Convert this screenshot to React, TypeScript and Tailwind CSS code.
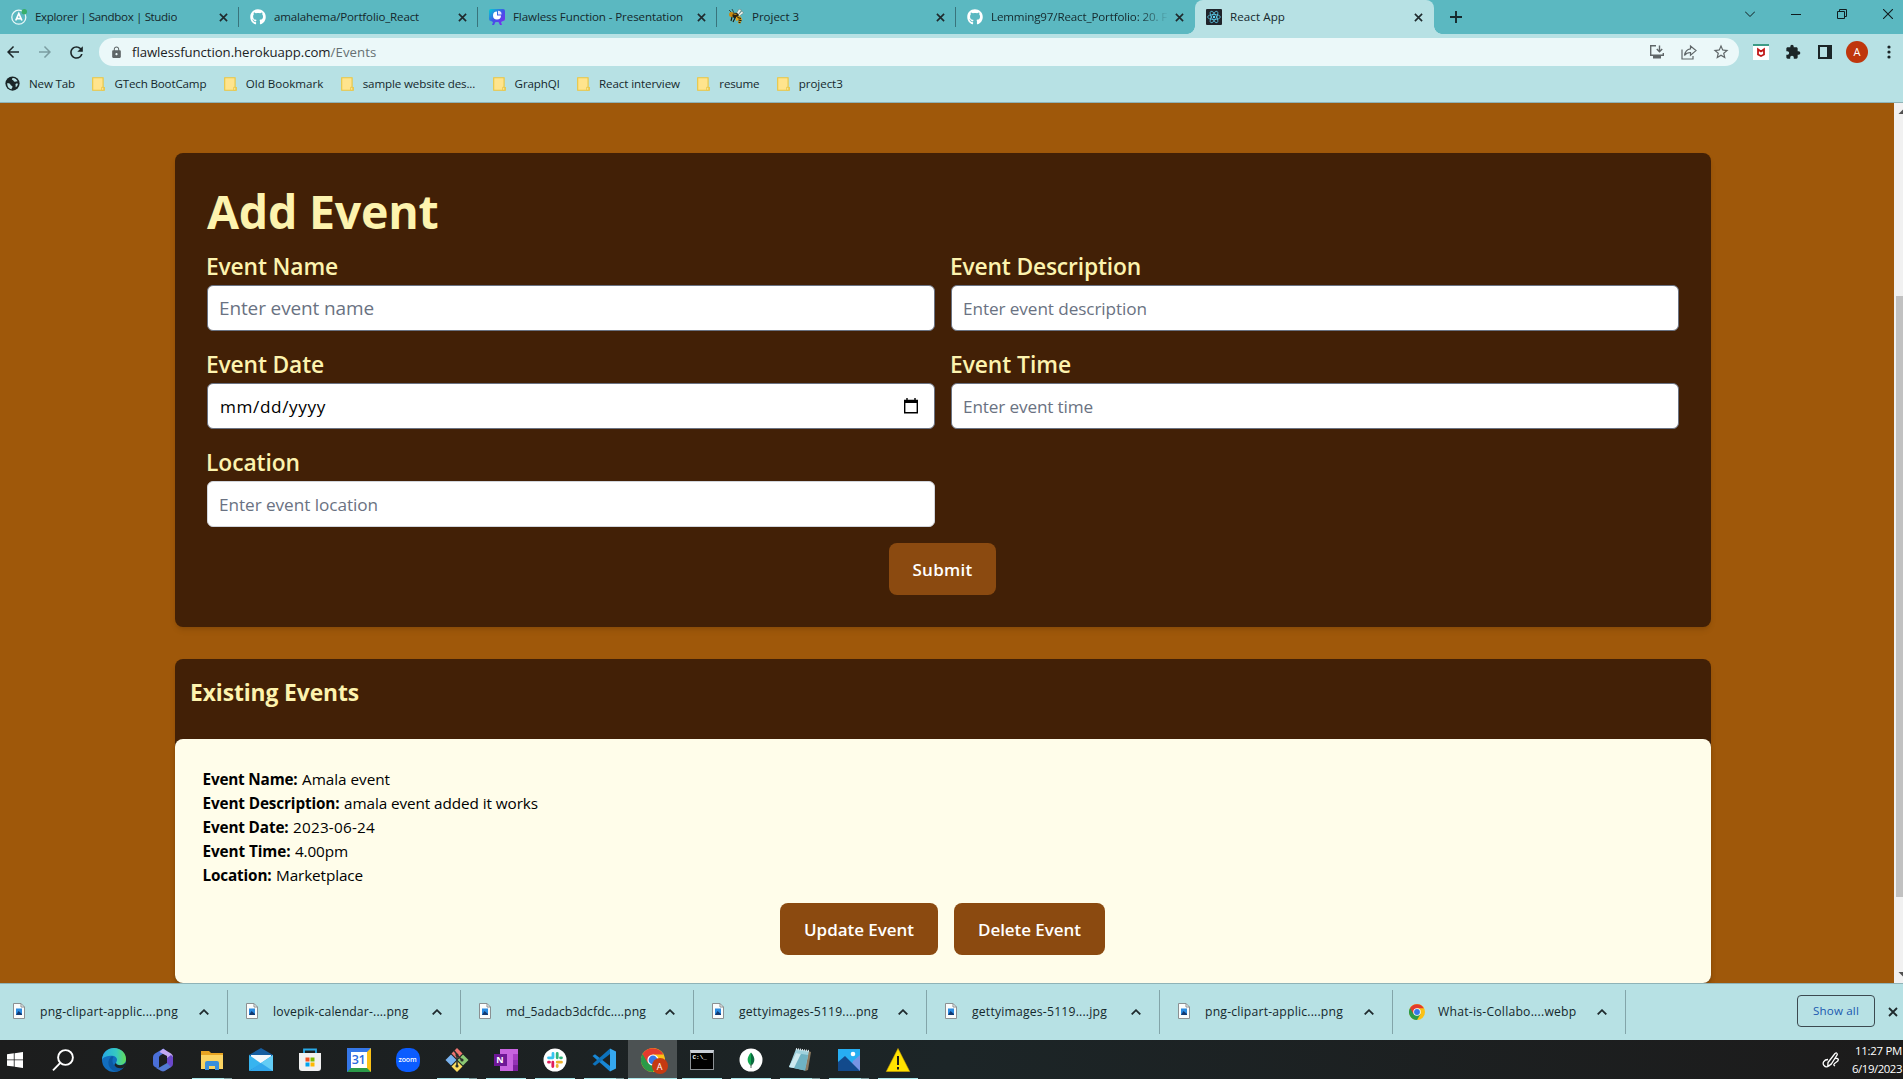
import { useLayoutEffect, useRef, type ReactNode } from "react";
import { FaGithub } from "react-icons/fa";
import { MdExtension, MdLock, MdStarBorder, MdRefresh, MdArrowBack, MdArrowForward } from "react-icons/md";

/* Text set to a given line width by adjusting its letter spacing. */
function Fit({ w, className = "", children }: { w: number; className?: string; children: string }) {
  const ref = useRef<HTMLSpanElement>(null);
  useLayoutEffect(() => {
    const el = ref.current;
    if (!el) return;
    el.style.letterSpacing = "0px";
    const natural = el.getBoundingClientRect().width;
    el.style.letterSpacing = `${(w - natural) / children.length}px`;
  }, [w, children]);
  return (
    <span ref={ref} className={`inline-block shrink-0 whitespace-pre ${className}`}>
      {children}
    </span>
  );
}

function Close({ className = "" }: { className?: string }) {
  return (
    <svg viewBox="0 0 10 10" className={`h-[9px] w-[9px] shrink-0 ${className}`} fill="none" stroke="#1f2a2d" strokeWidth="1.8">
      <path d="M1 1l8 8M9 1l-8 8" />
    </svg>
  );
}

function ChromeLogo({ className = "" }: { className?: string }) {
  return (
    <svg viewBox="0 0 24 24" className={`shrink-0 ${className}`}>
      <circle cx="12" cy="12" r="12" fill="#fbc116" />
      <path d="M12 12L1.6 6A12 12 0 0 0 12 24l5.2-9z" fill="#2a9a48" />
      <path d="M1.6 6A12 12 0 0 1 22.4 6.5H12L6.8 15z" fill="#e33b2e" />
      <circle cx="12" cy="12" r="5.6" fill="#fff" />
      <circle cx="12" cy="12" r="4.4" fill="#3577e8" />
    </svg>
  );
}

const ApolloIcon = () => (
  <svg viewBox="0 0 16 16" className="h-4 w-4 overflow-visible">
    <circle cx="7.8" cy="8.2" r="7" fill="none" stroke="#e9f8f9" strokeWidth="1.3" />
    <path d="M4.7 11.5L7.8 4.5l3.1 7M6 9.7h3.7" fill="none" stroke="#fff" strokeWidth="1.7" />
    <circle cx="13.3" cy="2.8" r="2.7" fill="#38ae6b" />
  </svg>
);
const PitchIcon = () => (
  <svg viewBox="0 0 16 16" className="h-4 w-4">
    <defs>
      <linearGradient id="pitch" x1="0" y1="0" x2="1" y2="1">
        <stop offset="0" stopColor="#00d0d4" />
        <stop offset=".5" stopColor="#3f55e8" />
        <stop offset="1" stopColor="#8b22f0" />
      </linearGradient>
    </defs>
    <path d="M2 0h12a2 2 0 0 1 2 2v8a2 2 0 0 1-2 2l-2 1 1 3h-2l-1.5-3H6.500L5 16H3l1-3-2-1a2 2 0 0 1-2-2V2a2 2 0 0 1 2-2z" fill="url(#pitch)" />
    <path d="M8 2.500a4 4 0 1 0 4 4H8z" fill="#fff" />
    <path d="M9 1.800v3.700h3.600A3.700 3.700 0 0 0 9 1.800z" fill="#e3e6ff" />
  </svg>
);
const BeeIcon = () => (
  <svg viewBox="0 0 16 16" className="h-4 w-4">
    <path d="M5 5L1 1M6 4L4 0" stroke="#27322f" strokeWidth=".8" />
    <path d="M8 5l3-5 2.500 1-3.500 5zM10 6l4-4 1.500 2-4 3z" fill="#e6f0ea" stroke="#56605a" strokeWidth=".4" />
    <circle cx="3.500" cy="5.500" r="2.500" fill="#c98a12" />
    <ellipse cx="7.500" cy="6.500" rx="3" ry="2.700" fill="#2b2110" />
    <path d="M8 8l4-1 2 3-2 5-2-1 1-3-3 1z" fill="#e2a31a" />
    <path d="M9.500 8.500l3.500 1M10.500 11l3 .6M10.500 13l2 .8M4 8l-1 4M7 9l-2 4" stroke="#1f1808" strokeWidth="1.100" />
    <path d="M5.500 5l3 .4" stroke="#e2a31a" strokeWidth="1" />
  </svg>
);
const ReactIcon = () => (
  <svg viewBox="0 0 16 16" className="h-4 w-4">
    <rect width="16" height="16" rx="1" fill="#20232a" />
    <g fill="none" stroke="#61dafb" strokeWidth=".7">
      <ellipse cx="8" cy="8" rx="6.400" ry="2.500" />
      <ellipse cx="8" cy="8" rx="6.400" ry="2.500" transform="rotate(60 8 8)" />
      <ellipse cx="8" cy="8" rx="6.400" ry="2.500" transform="rotate(120 8 8)" />
    </g>
    <circle cx="8" cy="8" r="1.200" fill="#61dafb" />
  </svg>
);

const tabs: { title: string; w: number; icon: ReactNode; fade?: boolean; active?: boolean; divider?: boolean }[] = [
  { title: "Explorer | Sandbox | Studio", w: 142, icon: <ApolloIcon />, divider: true },
  { title: "amalahema/Portfolio_React", w: 145, icon: <FaGithub className="h-4 w-4 text-white" />, divider: true },
  { title: "Flawless Function - Presentation", w: 170, icon: <PitchIcon />, divider: true },
  { title: "Project 3", w: 47, icon: <BeeIcon />, divider: true },
  { title: "Lemming97/React_Portfolio: 20. F", w: 176, icon: <FaGithub className="h-4 w-4 text-white" />, fade: true },
  { title: "React App", w: 55, icon: <ReactIcon />, active: true },
];

function TabStrip() {
  return (
    <div className="flex h-[34px] bg-[#5bb8c1]">
      {tabs.map((t) => (
        <div
          key={t.title}
          className={`relative flex h-[34px] w-[239px] shrink-0 items-center pr-[11px] pl-[11px] ${t.active ? "rounded-t-lg bg-[#b7e1e4]" : ""}`}
        >
          <span className="mr-2 shrink-0">{t.icon}</span>
          <span className={`flex overflow-hidden pb-px ${t.fade ? "[mask-image:linear-gradient(to_right,#000_84%,transparent_101%)]" : ""}`}>
            <Fit w={t.w} className="text-[11.6px] leading-4 text-[#15282c]">{t.title}</Fit>
          </span>
          <Close className="ml-auto" />
          {t.divider && <span className="absolute top-[7px] right-0 h-5 w-px bg-[#39747c]" />}
          {t.active && (
            <>
              <span className="absolute bottom-0 -left-2 h-2 w-2 bg-[radial-gradient(circle_at_0_0,#5bb8c1_7.500px,#b7e1e4_8px)]" />
              <span className="absolute -right-2 bottom-0 h-2 w-2 bg-[radial-gradient(circle_at_100%_0,#5bb8c1_7.500px,#b7e1e4_8px)]" />
            </>
          )}
        </div>
      ))}
      <svg viewBox="0 0 12 12" className="mt-[11px] ml-4 h-3 w-3" stroke="#15282c" strokeWidth="1.900">
        <path d="M6 0v12M0 6h12" />
      </svg>
      <div className="mt-[9px] mr-[10px] ml-auto flex h-[10px] items-center gap-9">
        <svg viewBox="0 0 10 10" className="h-[10px] w-[10px]" fill="none" stroke="#101c1f">
          <path d="M0 2.500l5 5 5-5" />
        </svg>
        <svg viewBox="0 0 10 10" className="h-[10px] w-[10px]" stroke="#101c1f">
          <path d="M0 5.500h10" />
        </svg>
        <svg viewBox="0 0 10 10" className="h-[10px] w-[10px]" fill="none" stroke="#101c1f">
          <path d="M.5 2.500h7v7h-7zM2.500 2.500v-2h7v7h-2" />
        </svg>
        <svg viewBox="0 0 10 10" className="h-[10px] w-[10px]" stroke="#101c1f" strokeWidth="1.100">
          <path d="M0 0l10 10M10 0L0 10" />
        </svg>
      </div>
    </div>
  );
}

function Toolbar() {
  return (
    <div className="flex h-8 items-center pt-1">
      <div className="flex w-[99px] items-center gap-[14px] pl-1 text-[18px] text-[#1b2527]">
        <MdArrowBack />
        <MdArrowForward className="text-[#7b9da1]" />
        <MdRefresh className="-ml-px text-[19px]" />
      </div>
      <div className="flex h-7 w-[1640px] items-center rounded-full bg-[#ebf8f9] pr-[9px] pl-[11px] text-[#5f6668]">
        <MdLock className="mr-[9px] h-[13px] w-[13px]" />
        <span className="flex pt-px text-[13.200px]">
          <Fit w={198.500} className="text-[#1b2224]">flawlessfunction.herokuapp.com</Fit>
          <Fit w={46} className="text-[#667073]">/Events</Fit>
        </span>
        <svg viewBox="0 0 16 16" className="mr-4 ml-auto h-4 w-4" fill="none" stroke="currentColor" strokeWidth="1.400">
          <path d="M7 1.700H1.700v9.600h12.600V9M10.500 1.500v6M7.800 5L10.500 7.800 13.200 5" />
          <path d="M4 12h8v2.500H4z" fill="currentColor" stroke="none" />
        </svg>
        <svg viewBox="0 0 16 16" className="mr-[15px] h-4 w-4" fill="none" stroke="currentColor" strokeWidth="1.200">
          <path d="M1 5.500v9.500h11v-3M9.500 2v2.800C5.500 5.300 4 8 3.500 11.500c1.500-2.200 3.200-3 6-3v2.800L15 6.600z" />
        </svg>
        <MdStarBorder className="h-[18px] w-[18px]" />
      </div>
      <div className="flex flex-1 items-center pl-[14px]">
        <svg viewBox="0 0 16 16" className="h-4 w-4">
          <path d="M0 2h16v14H0z" fill="#fff" />
          <path d="M0 0h16v2H0z" fill="#3c9c86" />
          <path d="M5 5.200v5.300l3 1.500 3-1.500V5.200L8 7.400z" fill="none" stroke="#c01818" strokeWidth="1.800" />
        </svg>
        <MdExtension className="ml-4 h-4 w-4 text-[#1b2527]" />
        <svg viewBox="0 0 14 14" className="ml-[17px] h-[14px] w-[14px]">
          <path d="M1 1h12v12H1z" fill="none" stroke="#1b2527" strokeWidth="2" />
          <path d="M9 1h4v12H9z" fill="#1b2527" />
        </svg>
        <span className="ml-[14px] flex h-[22px] w-[22px] items-center justify-center rounded-full bg-[#bf360c] text-[11px] text-white">A</span>
        <svg viewBox="0 0 4 14" className="ml-[19px] h-[14px] w-1" fill="#1b2527">
          <circle cx="2" cy="2" r="1.600" />
          <circle cx="2" cy="7" r="1.600" />
          <circle cx="2" cy="12" r="1.600" />
        </svg>
      </div>
    </div>
  );
}

const bookmarks = [
  { label: "GTech BootCamp", w: 92 },
  { label: "Old Bookmark", w: 77.5 },
  { label: "sample website des...", w: 112.5 },
  { label: "GraphQl", w: 45 },
  { label: "React interview", w: 81 },
  { label: "resume", w: 40 },
  { label: "project3", w: 44 },
];

function Bookmarks() {
  return (
    <div className="flex h-9 items-center gap-[17.400px] pl-[5px] text-[11.600px] text-[#15282c]">
      <span className="flex items-center">
        <svg viewBox="0 0 16 16" className="mr-[9px] h-[15px] w-[15px]">
          <circle cx="8" cy="8" r="7.600" fill="#1b2527" />
          <path d="M2.500 7.500c2 0 3 .8 3.500 2s2 .6 2 2-1 1-1 2.700C4 13.800 2 11 2.500 7.500zM8.500 2c-1.800.8-1.200 2-.3 2.300s1 1.700 2.300 1.700 2-.5 3-.3C12.800 3.800 10.800 2 8.500 2zM13.800 8.300c-1.500-.8-3 0-2.600 1.200.5 1-.2 1.500.4 2.500 1.200-.7 2-2 2.200-3.700z" fill="#b7e1e4" />
        </svg>
        <Fit w={46} className="pb-px">New Tab</Fit>
      </span>
      {bookmarks.map((b) => (
        <span key={b.label} className="flex items-center">
          <svg viewBox="0 0 13 14" className="mr-[9px] h-[14px] w-[13px]">
            <path d="M.7.700h10.400v9.500l1.200.3v2.800H.700z" fill="#ffe48d" stroke="#eac540" strokeWidth="1.100" />
            <path d="M9.600 10.300h1.600v3H9.600z" fill="#fff0b8" stroke="#eac540" strokeWidth=".8" />
          </svg>
          <Fit w={b.w} className="pb-px">{b.label}</Fit>
        </span>
      ))}
    </div>
  );
}

function Field({ label, lw, text, w, big, date, soft }: { label: string; lw: number; text: string; w: number; big?: boolean; date?: boolean; soft?: boolean }) {
  return (
    <div className="flex flex-col gap-[2px]">
      <div className="-ml-px h-8 text-[22.800px] leading-8 font-semibold text-[#fdf3ae]">
        <Fit w={lw}>{label}</Fit>
      </div>
      <div className={`flex h-[46px] items-center justify-between rounded-md border bg-white pr-[15px] pl-[11px] ${soft ? "border-gray-300" : "border-gray-500"}`}>
        <Fit w={w} className={`pt-px ${big ? "text-[19px]" : "text-[17.200px]"} ${date ? "ml-px text-black" : "text-gray-500"}`}>{text}</Fit>
        {date && (
          <svg viewBox="0 0 16 18" className="h-[18px] w-4" fill="none" stroke="#000" strokeWidth="1.400">
            <path d="M1.700 3.500h12.600v12.200H1.700z" />
            <path d="M1 4.500h14" strokeWidth="3" />
            <path d="M4 1v3M12 1v3" />
          </svg>
        )}
      </div>
    </div>
  );
}

function Button({ w, className, children }: { w: number; className: string; children: string }) {
  return (
    <button className={`flex h-[52px] items-center justify-center rounded-lg bg-[#8b4a10] pt-px text-[17px] font-semibold text-white ${className}`}>
      <Fit w={w}>{children}</Fit>
    </button>
  );
}

const details: [string, number, string, number][] = [
  ["Event Name:", 95, "Amala event", 88],
  ["Event Description:", 137, "amala event added it works", 194],
  ["Event Date:", 86, "2023-06-24", 82],
  ["Event Time:", 88, "4.00pm", 53],
  ["Location:", 69, "Marketplace", 87],
];

function Page() {
  return (
    <main className="flex-1 overflow-hidden bg-[#9f580a] pt-[50px] pl-[175px]">
      <section className="h-[474px] w-[1536px] rounded-lg bg-[#422006] px-8 pt-[34px] shadow-md">
        <h1 className="h-12 text-[46.500px] leading-[48px] font-bold text-[#fdf3ae]">
          <Fit w={231.500}>Add Event</Fit>
        </h1>
        <div className="mt-4 grid grid-cols-2 gap-x-4 gap-y-[18px]">
          <Field label="Event Name" lw={132} text="Enter event name" w={155} big />
          <Field label="Event Description" lw={191} text="Enter event description" w={184} />
          <Field label="Event Date" lw={118} text="mm/dd/yyyy" w={106} date />
          <Field label="Event Time" lw={121} text="Enter event time" w={130} />
          <Field label="Location" lw={94} text="Enter event location" w={159} soft />
        </div>
        <div className="mt-4 flex justify-center pr-px">
          <Button w={60} className="w-[107px]">Submit</Button>
        </div>
      </section>
      <section className="mt-8 w-[1536px] rounded-lg bg-[#422006] shadow-md">
        <h2 className="h-20 pt-[18px] pl-[15px] text-[22.800px] leading-8 font-bold text-[#fdf3ae]">
          <Fit w={169}>Existing Events</Fit>
        </h2>
        <div className="h-[244px] rounded-lg bg-[#fffdea] pt-7 shadow-md">
          <div className="pl-[27.500px] text-[15.300px] leading-6 text-black">
            {details.map(([k, kw, v, vw]) => (
              <p key={k} className="flex h-6 gap-[4.500px]">
                <Fit w={kw} className="font-bold">{k}</Fit>
                <Fit w={vw}>{v}</Fit>
              </p>
            ))}
          </div>
          <div className="mt-4 flex justify-center gap-4 pr-px">
            <Button w={110} className="w-[158px]">Update Event</Button>
            <Button w={103} className="w-[151px]">Delete Event</Button>
          </div>
        </div>
      </section>
    </main>
  );
}

function Scrollbar() {
  return (
    <div className="flex w-[9px] flex-col overflow-hidden bg-[#f1f1f1] pl-[2px]">
      <svg viewBox="0 0 7 16" className="h-4 w-[7px]"><path d="M2.500 11L7 6.500V11z" fill="#505050" /></svg>
      <div className="mt-[177px] h-[601px] bg-[#c1c1c1]" />
      <svg viewBox="0 0 7 16" className="mt-auto h-4 w-[7px]"><path d="M2.500 5L7 9.500V5z" fill="#505050" /></svg>
    </div>
  );
}

const downloads = [
  { name: "png-clipart-applic....png", w: 138 },
  { name: "lovepik-calendar-....png", w: 135.5 },
  { name: "md_5adacb3dcfdc....png", w: 140 },
  { name: "gettyimages-5119....png", w: 139 },
  { name: "gettyimages-5119....jpg", w: 135 },
  { name: "png-clipart-applic....png", w: 138 },
  { name: "What-is-Collabo....webp", w: 138.5, chrome: true },
];

function Downloads() {
  return (
    <div className="flex h-[57px] items-center border-t border-[#8fb3b7] bg-[#b7e1e4] text-[#15282c]">
      {downloads.map((d, i) => (
        <div key={i} className={`flex h-11 shrink-0 items-center border-r border-[#83a5a9] pr-[18px] ${d.chrome ? "w-[233px] pl-4" : i === 0 ? "w-[228px] pl-[13px]" : "w-[233px] pl-[18px]"}`}>
          {d.chrome ? (
            <ChromeLogo className="mr-[13px] mb-px h-4 w-4" />
          ) : (
            <svg viewBox="0 0 12 16" className="mr-[15px] mb-[2px] h-4 w-3 shrink-0">
              <path d="M.5.500h7.500l3.500 3.500v11.500H.5z" fill="#fafcfc" stroke="#8b9092" />
              <path d="M8 .5v3.500h3.500" fill="none" stroke="#8b9092" />
              <path d="M3 5.500h6v6.500H3z" fill="#2b8be0" />
              <path d="M3 12l2.500-4L9 11v1z" fill="#123a72" />
            </svg>
          )}
          <Fit w={d.w} className="pt-px text-[12.200px]">{d.name}</Fit>
          <svg viewBox="0 0 10 6" className="ml-auto h-[6px] w-[10px]" fill="none" stroke="#1f2a2d" strokeWidth="1.800">
            <path d="M.7 5.400L5 1.200l4.300 4.200" />
          </svg>
        </div>
      ))}
      <div className="mr-[13px] mb-[2px] ml-auto flex h-8 w-[78px] items-center justify-center rounded border border-[#3c4a50] pb-px text-[11.600px] text-[#1b59b0]">
        <Fit w={46} className="font-medium">Show all</Fit>
      </div>
      <Close className="mr-[5px] h-[10px] w-[10px]" />
    </div>
  );
}

const art = "h-6 w-6 overflow-visible";
const taskIcons: { id: string; open?: boolean; stacked?: boolean; active?: boolean; icon: ReactNode }[] = [
  {
    id: "edge",
    icon: (
      <svg viewBox="0 0 24 24" className={art}>
        <defs>
          <linearGradient id="edgeTop" x1="0" x2="1"><stop offset="0" stopColor="#25a8e6" /><stop offset=".6" stopColor="#36c9c0" /><stop offset="1" stopColor="#64dd55" /></linearGradient>
        </defs>
        <circle cx="12" cy="12" r="12" fill="#126ebf" />
        <path d="M0 12C.5 4 6 0 12 0c7 0 12 5 12 11 0 4-3 6-6 6-3 0-4-1.200-4-2.200 0-.8 1-1.200 1-3 0-2-2-4-5-4C5.500 7.800 1 9 0 12z" fill="url(#edgeTop)" />
        <path d="M10 8c-3 2-4 5-3.500 8 .6 4 4 7 8 7.500A12 12 0 0 0 23 17.500c-3 2-9 2.500-11.500-1C10 14 10 11 11.500 9z" fill="#0c59a4" />
        <path d="M14 14.800C14 16 15 17.200 18 17.200c2 0 4-.7 5.300-2.500L24 18l-3 2c-4 1-7.500-.5-8.700-3z" fill="#1c2325" />
      </svg>
    ),
  },
  {
    id: "m365",
    icon: (
      <svg viewBox="0 0 24 24" className={art}>
        <path d="M12.500 0.500L4 5.500Q2 6.700 2 9v7q0 2 2 3l2 1q2 .6 2-1.500V9.500q0-1.500 1.500-2.300L16 3.500z" fill="#4a6fd8" />
        <path d="M12 .8l8 4.700q2 1.200 2 3.500v5l-6-3.500V8L8.500 4z" fill="#c3a8f2" />
        <path d="M22 9v7q0 1.800-1.800 3L14 22.800q-2 1.100-4 0L5 20c2 .6 3-.2 5-1.300l6-3.500V10l4-3z" fill="#6b47c9" />
        <path d="M5 20c3 .5 4-1 7-2.700l4-2.200 4 4-6 3.700q-2 1.100-4 0z" fill="#3fa6d8" opacity=".55" />
      </svg>
    ),
  },
  {
    id: "files",
    open: true,
    stacked: true,
    icon: (
      <svg viewBox="0 0 24 24" className={art}>
        <path d="M1 3h8l2 2h12v4H1z" fill="#e8a422" />
        <path d="M1 7h22v14H1z" fill="#fcd462" />
        <path d="M5 22v-7q0-2 2-2h10q2 0 2 2v7h-4v-4H9v4z" fill="#3b8fdc" />
      </svg>
    ),
  },
  {
    id: "mail",
    icon: (
      <svg viewBox="0 0 24 24" className={art}>
        <path d="M0 7L12 0l12 7v3H0z" fill="#165ea0" />
        <path d="M2 7h20v9H2z" fill="#f4f8fb" />
        <path d="M0 7l13 9L0 23z" fill="#37b4ef" />
        <path d="M24 7v16H0L12 15z" fill="#32a8ec" />
        <path d="M12 15l12 8V7z" fill="#63cdf5" />
      </svg>
    ),
  },
  {
    id: "store",
    icon: (
      <svg viewBox="0 0 24 24" className={art}>
        <path d="M6 6V1.500h12V6" fill="none" stroke="#29a9e8" strokeWidth="1.800" />
        <path d="M1 5h22v15q0 3-3 3H4q-3 0-3-3z" fill="#f1f1f1" />
        <path d="M7.500 9.500h4v4h-4z" fill="#f25022" />
        <path d="M12.500 9.500h4v4h-4z" fill="#7fba00" />
        <path d="M7.500 14.500h4v4h-4z" fill="#00a4ef" />
        <path d="M12.500 14.500h4v4h-4z" fill="#ffb900" />
      </svg>
    ),
  },
  {
    id: "calendar",
    icon: (
      <span className="flex h-6 w-6 items-center justify-center border-4 border-t-[#3577e8] border-r-[#fbc116] border-b-[#2a9a48] border-l-[#3577e8] bg-white text-[12.500px] leading-none font-semibold tracking-tight text-[#2a6be0]">31</span>
    ),
  },
  {
    id: "zoom",
    icon: <span className="flex h-6 w-6 items-center justify-center rounded-[10px] bg-[#0b5cff] pb-px text-[7px] leading-none font-semibold tracking-tight text-white">zoom</span>,
  },
  {
    id: "git",
    open: true,
    stacked: true,
    icon: (
      <svg viewBox="0 0 24 24" className={art}>
        <path d="M12 0l5.500 5.500L12 11 6.500 5.500z" fill="#ee7570" />
        <path d="M6 6.500l5.500 5.500L6 17.500.500 12z" fill="#7ab3ef" />
        <path d="M18 6.500l5.500 5.500-5.500 5.500-5.500-5.500z" fill="#8bc874" />
        <path d="M12 13l5.500 5.500L12 24l-5.500-5.500z" fill="#fbdc60" />
        <path d="M9 2.500l3 4v11M12 7l5 5" stroke="#29302c" strokeWidth="1.500" fill="none" />
        <circle cx="12" cy="7" r="1.600" fill="#29302c" /><circle cx="17" cy="12" r="1.600" fill="#29302c" /><circle cx="12" cy="18" r="1.600" fill="#29302c" />
      </svg>
    ),
  },
  {
    id: "onenote",
    open: true,
    icon: (
      <span className="relative flex h-6 w-6 items-center">
        <svg viewBox="0 0 24 24" className={art}>
          <path d="M6 1h18v22H6z" fill="#c864e0" />
          <path d="M19 6h5v6h-5z" fill="#a83fc4" /><path d="M19 12h5v5h-5z" fill="#9332b4" /><path d="M19 17h5v6h-5z" fill="#7a1f9c" />
          <path d="M0 6h13v12H0z" fill="#6e1796" />
        </svg>
        <span className="absolute top-[6px] left-0 w-[13px] text-center text-[9px] leading-[12px] font-bold text-white">N</span>
      </span>
    ),
  },
  {
    id: "slack",
    open: true,
    icon: (
      <svg viewBox="0 0 24 24" className={art}>
        <circle cx="12" cy="12" r="11.500" fill="#fff" />
        <g strokeWidth="2.800" strokeLinecap="round">
          <path d="M10 5.500V9.500M5.500 9.800h4.300" stroke="#36c5f0" />
          <path d="M14.200 5.500v4.300M18.500 9.800h-1" stroke="#2eb67d" />
          <path d="M18.500 14.200h-4.300M14.200 18.500v-1" stroke="#ecb22e" />
          <path d="M9.800 18.500v-4.300M5.500 14.200h1" stroke="#e01e5a" />
        </g>
      </svg>
    ),
  },
  {
    id: "vscode",
    open: true,
    stacked: true,
    icon: (
      <svg viewBox="0 0 24 24" className={art}>
        <path d="M.5 8l2.500-1.800L18 18v5.500z" fill="#1887d4" />
        <path d="M.5 16L3 17.800 18 6V.500z" fill="#0d72bc" />
        <path d="M18 .5l6 3v17l-6 3z" fill="#35a8f0" />
      </svg>
    ),
  },
  {
    id: "chrome",
    open: true,
    active: true,
    icon: (
      <span className="relative h-6 w-6">
        <ChromeLogo className="h-6 w-6" />
        <span className="absolute top-[10px] left-[11px] flex h-4 w-4 items-center justify-center rounded-full bg-[#c53a12] text-[9px] leading-none text-white">A</span>
      </span>
    ),
  },
  {
    id: "terminal",
    open: true,
    icon: (
      <span className="flex h-5 w-6 items-start border border-t-[3px] border-[#8d9296] border-t-[#c8ced6] bg-black pt-[2px] pl-[2px] font-['Liberation_Mono'] text-[6px] leading-none font-bold text-white">C:\_</span>
    ),
  },
  {
    id: "mongo",
    open: true,
    icon: (
      <svg viewBox="0 0 24 24" className={art}>
        <circle cx="12" cy="12" r="11.500" fill="#fff" />
        <path d="M12 4.500c-4.500 5-4.500 9.500 0 13.500z" fill="#13aa52" />
        <path d="M12 4.500c4.500 5 4.500 9.500 0 13.500z" fill="#0b6b3f" />
        <path d="M12 16v4" stroke="#5c6b60" />
      </svg>
    ),
  },
  {
    id: "notepad",
    open: true,
    stacked: true,
    icon: (
      <svg viewBox="0 0 24 24" className={art}>
        <path d="M20 3l3 1-3 18-3 1z" fill="#8d7b62" />
        <path d="M8 1l13 2-4 19.500L1 19z" fill="#9fd2de" />
        <path d="M8 5l12 2-3 15.500L1 19z" fill="#6fb3c4" />
        <path d="M8 5l5 .8L6 20l-5-1z" fill="#cdeaf0" />
        <path d="M8 1l13 2" stroke="#dfe7ea" strokeWidth="2" strokeDasharray="1 1" />
      </svg>
    ),
  },
  {
    id: "photos",
    open: true,
    stacked: true,
    icon: (
      <svg viewBox="0 0 24 24" className={art}>
        <path d="M1 1h22v22H1z" fill="#27aef2" />
        <path d="M23 7v16H12l4-10z" fill="#7694e4" />
        <path d="M1 14l7-6 15 15H1z" fill="#124a8c" />
        <circle cx="16" cy="6" r="2.300" fill="#fff" />
      </svg>
    ),
  },
  {
    id: "warning",
    open: true,
    icon: (
      <svg viewBox="0 0 24 24" className={art}>
        <path d="M12 .5L23.700 23.500H.3z" fill="#ffe200" stroke="#d4a800" strokeWidth=".6" />
        <path d="M12 8v9M12 19v2.500" stroke="#1a1a1a" strokeWidth="2" />
      </svg>
    ),
  },
];

function Taskbar() {
  return (
    <div className="flex h-[39px] overflow-hidden bg-linear-to-r from-[#1c1d1d] via-[#1c2527] to-[#1c1b1b]">
      <div className="flex w-[39px] items-center pl-[7px]">
        <svg viewBox="0 0 16 16" className="h-4 w-4" fill="#fff">
          <path d="M0 2.200L6.800 1.300v6.200H0zM7.600 1.200L16 0v7.500H7.600zM0 8.300h6.800v6.300L0 13.700zM7.600 8.300H16V16l-8.400-1.200z" />
        </svg>
      </div>
      <div className="flex w-[50px] items-center justify-center pr-[2px]">
        <svg viewBox="0 0 22 22" className="h-[22px] w-[22px]" fill="none" stroke="#fff" strokeWidth="1.900">
          <circle cx="13.500" cy="8.500" r="7.400" />
          <path d="M8.300 13.900L1 21.300" />
        </svg>
      </div>
      {taskIcons.map((t) => (
        <div key={t.id} className={`flex h-[39px] w-[49px] shrink-0 flex-col items-center ${t.active ? "bg-[#4c5253]" : ""}`}>
          <div className="flex h-[38px] items-center pt-[2px]">{t.icon}</div>
          {t.open && (
            <div className={`flex h-px bg-[#a8e4e8] ${t.active ? "w-[49px]" : "w-10"}`}>
              {t.stacked && <span className="ml-auto w-2 bg-[#7b9a9c]" />}
            </div>
          )}
        </div>
      ))}
      <svg viewBox="0 0 18 18" className="mt-[11px] mr-3 ml-auto h-[18px] w-[18px] shrink-0" fill="none" stroke="#fff" strokeWidth="1.300">
        <path d="M6 11.500L13 2.500q2-1.500 2.300 1L9 13.500 5.800 15zM6 8.500C2 8.500 0 12 2 14.500s5 1 7-1.500M13.500 7.500c3-.5 4 1.500 1 3.500s-3.500 3-1.500 4" />
      </svg>
      <div className="flex w-[51px] shrink-0 flex-col items-start text-[11.400px] leading-[18px] whitespace-nowrap text-white">
        <Fit w={47} className="mt-[2px] ml-[3px]">11:27 PM</Fit>
        <Fit w={50}>6/19/2023</Fit>
      </div>
    </div>
  );
}

export default function App() {
  return (
    <div className="flex h-[1079px] w-[1903px] flex-col overflow-hidden bg-[#b7e1e4] font-['Open_Sans','Noto_Sans',sans-serif]">
      <TabStrip />
      <Toolbar />
      <Bookmarks />
      <div className="h-px bg-[#8fb3b7]" />
      <div className="flex h-[880px]">
        <Page />
        <Scrollbar />
      </div>
      <Downloads />
      <Taskbar />
    </div>
  );
}
